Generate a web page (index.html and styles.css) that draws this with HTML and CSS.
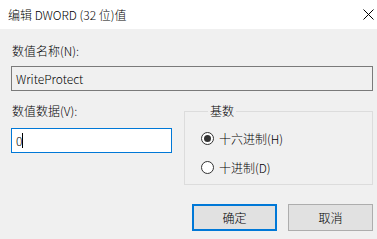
FILE: index.html
```html
<!DOCTYPE html>
<html lang="zh-CN">
<head>
    <meta charset="UTF-8">
    <title>编辑 DWORD (32 位)值</title>
    <link rel="stylesheet" href="styles.css">
</head>
<body>
    <div class="dialog">
        <div class="titlebar">
            <span class="title">编辑 DWORD (32 位)值</span>
            <svg class="close" width="11" height="11" viewBox="0 0 11 11">
                <path d="M0.5 0.5 L10.5 10.5 M10.5 0.5 L0.5 10.5" stroke="#000" stroke-width="1" fill="none"/>
            </svg>
        </div>

        <div class="content">
            <label class="label name-label">数值名称(N):</label>
            <div class="field readonly">WriteProtect</div>

            <div class="row">
                <div class="value-col">
                    <label class="label">数值数据(V):</label>
                    <div class="field focused">0<span class="caret"></span></div>
                </div>

                <fieldset class="base">
                    <legend>基数</legend>
                    <label class="radio"><span class="dot checked"></span>十六进制(H)</label>
                    <label class="radio"><span class="dot"></span>十进制(D)</label>
                </fieldset>
            </div>

            <div class="buttons">
                <button class="btn default">确定</button>
                <button class="btn">取消</button>
            </div>
        </div>
    </div>
</body>
</html>
```

FILE: styles.css
```css
body {
    margin: 0;
    padding: 0;
    font-family: "Noto Sans CJK SC", "Noto Sans", sans-serif;
    font-size: 12px;
    font-weight: 300;
    color: #000;
}

.dialog {
    width: 377px;
    height: 239px;
    background-color: #f0f0f0;
    overflow: hidden;
}

.titlebar {
    height: 29px;
    background-color: #fff;
    display: flex;
    align-items: center;
    justify-content: space-between;
    padding: 0 3px 0 8px;
}

.title {
    line-height: 16px;
}

.close {
    display: block;
}

.content {
    padding: 14px 4px 0 11px;
}

.label {
    display: block;
    line-height: 16px;
    padding-left: 1px;
}

.field {
    box-sizing: border-box;
    height: 25px;
    line-height: 23px;
    padding-left: 4px;
    border: 1px solid #7a7a7a;
    display: flex;
    align-items: center;
}

.name-label {
    margin-bottom: 7px;
}

.readonly {
    background-color: #f0f0f0;
}

.focused {
    background-color: #fff;
    border-color: #0078d7;
}

.caret {
    display: inline-block;
    width: 1px;
    height: 15px;
    background-color: #000;
}

.row {
    display: flex;
    gap: 12px;
    margin-top: 12px;
}

.value-col {
    width: 161px;
}

.value-col .label {
    margin-bottom: 9px;
}

.base {
    flex: 1;
    margin: 0;
    padding: 6px 0 0 16px;
    border: 1px solid #dcdcdc;
    height: 82px;
    box-sizing: border-box;
}

.base legend {
    margin-left: 7px;
    padding: 0 2px;
    line-height: 16px;
}

.radio {
    display: flex;
    align-items: center;
    height: 16px;
    margin-top: 5px;
}

.radio + .radio {
    margin-top: 13px;
}

.dot {
    box-sizing: border-box;
    width: 13px;
    height: 13px;
    border: 1px solid #333;
    border-radius: 50%;
    margin-right: 5px;
    background-color: #fff;
    position: relative;
}

.dot.checked::after {
    content: "";
    position: absolute;
    left: 2px;
    top: 2px;
    width: 7px;
    height: 7px;
    border-radius: 50%;
    background-color: #333;
}

.buttons {
    display: flex;
    justify-content: flex-end;
    gap: 11px;
    margin-top: 19px;
}

.btn {
    box-sizing: border-box;
    width: 85px;
    height: 27px;
    font-family: inherit;
    font-size: 12px;
    font-weight: 300;
    color: #000;
    background-color: #e1e1e1;
    border: 1px solid #adadad;
    padding: 0;
}

.btn.default {
    border: 2px solid #0078d7;
}
```
